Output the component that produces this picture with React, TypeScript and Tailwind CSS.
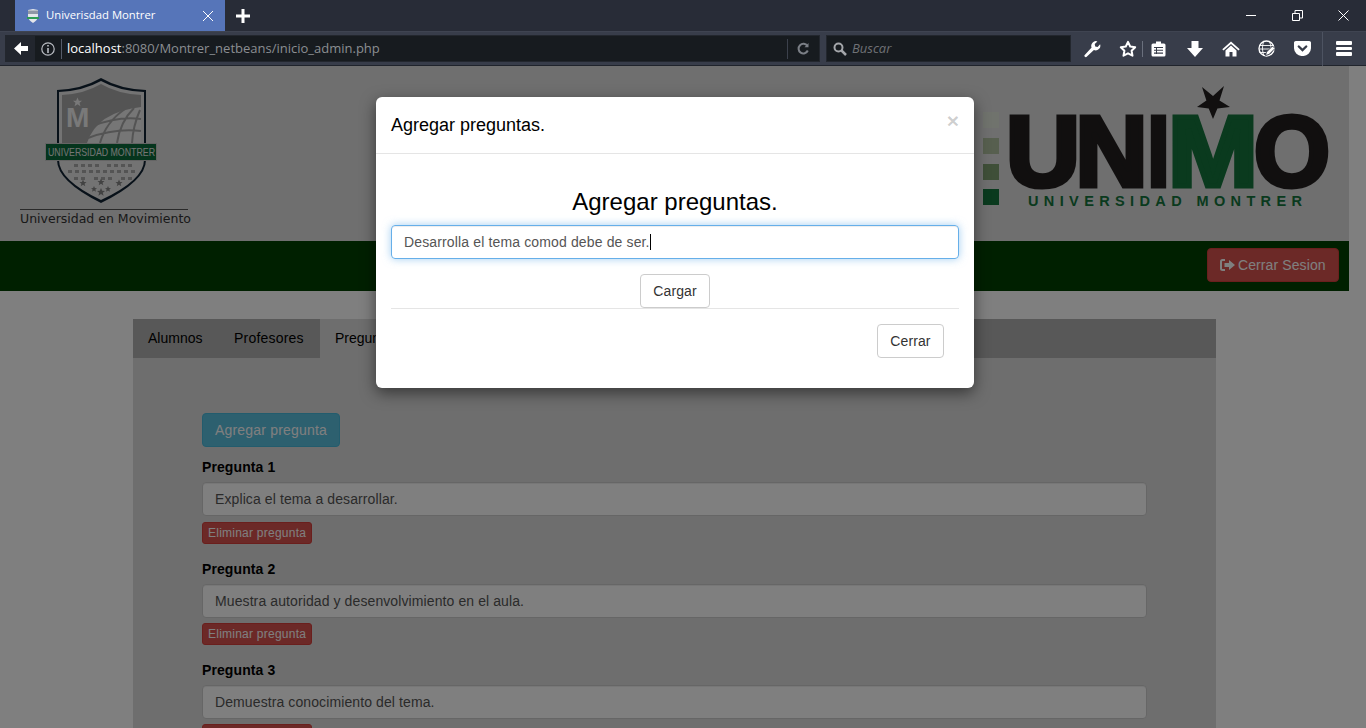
const questions = [
  { title: 'Pregunta 1', text: 'Explica el tema a desarrollar.' },
  { title: 'Pregunta 2', text: 'Muestra autoridad y desenvolvimiento en el aula.' },
  { title: 'Pregunta 3', text: 'Demuestra conocimiento del tema.' },
];

function ToolbarIcons() {
  return (
    <div className="flex items-center h-full">
      <svg width="18" height="18" viewBox="0 0 18 18" className="ml-[12px]" fill="#fff">
        <path d="M1.5 15.200 8.600 7.600a4.600 4.600 0 0 1 .9-4.900A4.600 4.600 0 0 1 14.400 1.400L11.700 4l.5 2.400 2.400.5 2.500-2.600a4.600 4.600 0 0 1-1.200 4.800 4.600 4.600 0 0 1-5 1L3.400 17a1.400 1.400 0 0 1-1.900-1.800z" />
      </svg>
      <svg width="18" height="18" viewBox="0 0 18 18" className="ml-[18px]" fill="none" stroke="#fff" strokeWidth="2" strokeLinejoin="round">
        <path d="M9 1.900l2.200 4.600 5 .7-3.600 3.500.9 5L9 13.300l-4.500 2.400.9-5-3.600-3.500 5-.7z" />
      </svg>
      <div className="w-px h-[16px] bg-[#6a707d] ml-[5px]" />
      <svg width="15" height="16" viewBox="0 0 15 16" className="ml-[8px]">
        <rect x="0.500" y="2.500" width="14" height="13" rx="1.500" fill="#fff" />
        <rect x="5" y="0.500" width="5" height="3" fill="#fff" />
        <path d="M3 6.500h9M3 9.300h9M3 12.100h9" stroke="#383d4a" strokeWidth="1.100" />
        <path d="M5.500 6v7" stroke="#383d4a" strokeWidth="1" />
      </svg>
      <svg width="16" height="16" viewBox="0 0 16 16" className="ml-[21px]" fill="#fff">
        <path d="M4.500 0h7v7H16l-8 9-8-9h4.500z" />
      </svg>
      <svg width="18" height="16" viewBox="0 0 18 16" className="ml-[19px]" fill="#fff">
        <path d="M9 .5 .3 8.200l1.200 1.200L9 3l7.500 6.400 1.200-1.200z" />
        <path d="M9 4.500 3.500 9.400V15.500h4V11h3v4.500h4V9.400z" />
      </svg>
      <svg width="18" height="17" viewBox="0 0 18 17" className="ml-[18px]" fill="none" stroke="#fff">
        <circle cx="8.500" cy="8.500" r="7.500" strokeWidth="1.400" />
        <path d="M1.500 5.500h14M1.500 9h13M1.500 12.500h8M6 1c-2 4-2 10 0 15M11 1c1.500 2.500 2 5 1.800 7" strokeWidth="0.900" />
        <path d="M7.500 15.500 8.500 12l6-6 2.500 2.500-6 6z" fill="#fff" stroke="#383d4a" strokeWidth="0.900" />
      </svg>
      <svg width="17" height="15" viewBox="0 0 17 15" className="ml-[18px]">
        <path d="M1.800 0h13.400c.9 0 1.800.8 1.800 1.800v5A8 8 0 0 1 8.500 15 8 8 0 0 1 0 6.800v-5C0 .8.900 0 1.800 0z" fill="#fff" />
        <path d="M4.800 5.500l3.700 3.500 3.700-3.500" fill="none" stroke="#383d4a" strokeWidth="2.400" strokeLinecap="round" />
      </svg>
      <div className="w-px h-[34px] bg-[#4d5361] ml-[11px]" />
      <div className="ml-[13px] flex flex-col gap-[2px]">
        <div className="w-[16px] h-[3.500px] bg-white rounded-[1px]" />
        <div className="w-[16px] h-[3.500px] bg-white rounded-[1px]" />
        <div className="w-[16px] h-[3.500px] bg-white rounded-[1px]" />
      </div>
    </div>
  );
}

function BrowserChrome() {
  return (
    <div className="h-[66px] bg-[#282c37] font-['Open_Sans',sans-serif]">
      <div className="h-[31px] flex items-center pl-[15px]">
        <div className="w-[210px] h-[31px] bg-[#5675b9] flex items-center pl-[12px] pr-[11px] text-white text-[11.300px]">
          <svg width="12" height="14" viewBox="0 0 12 14">
            <path d="M1 1 6 0l5 1v6c0 3-2 5-5 7-3-2-5-4-5-7z" fill="#e4e6ea" />
            <path d="M1 1.500h10v3.500H1z" fill="#8f96a5" />
            <rect x="0" y="8" width="12" height="2" fill="#2e9c55" />
          </svg>
          <span className="ml-[7px] flex-1">Univerisdad Montrer</span>
          <svg width="12" height="12" viewBox="0 0 12 12" stroke="#fff" strokeWidth="1">
            <path d="M1 1l10 10M11 1 1 11" />
          </svg>
        </div>
        <svg width="14" height="14" viewBox="0 0 14 14" className="ml-[11px]" fill="#fff">
          <path d="M5.500 0h3v5.500H14v3H8.500V14h-3V8.500H0v-3h5.500z" />
        </svg>
        <div className="ml-auto flex items-center h-full">
          <div className="w-[10px] h-px bg-white mr-[36px]" />
          <svg width="11" height="11" viewBox="0 0 11 11" fill="none" stroke="#fff" className="mr-[35px]">
            <path d="M.5 3.500h7v7h-7zM3 3.500V.5h7.500v7.500h-3" />
          </svg>
          <svg width="11" height="11" viewBox="0 0 11 11" stroke="#fff" className="mr-[17px]">
            <path d="M.5.500l10 10M10.500.500l-10 10" />
          </svg>
        </div>
      </div>
      <div className="h-[35px] bg-[#383d4a] border-t border-[#3f4451] border-b-[#20242c] border-b flex items-center pl-[5px]">
        <div className="w-[815px] h-[27px] bg-[#171b1f] flex items-center border border-[#23272e]">
          <div className="w-[29px] h-full bg-[#22262e] flex items-center justify-center">
            <svg width="14" height="13" viewBox="0 0 14 13" fill="#fff">
              <path d="M7 0 0 6.500 7 13V9h7V4H7z" />
            </svg>
          </div>
          <svg width="14" height="14" viewBox="0 0 14 14" className="ml-[6px]" fill="none" stroke="#b9bcc2" strokeWidth="1.200">
            <circle cx="7" cy="7" r="6.200" />
            <path d="M7 6v5M7 3v1.600" strokeWidth="1.600" />
          </svg>
          <div className="w-px h-[20px] bg-[#555b69] ml-[6px]" />
          <div className="ml-[5px] flex-1 text-[13px] leading-none text-[#8b8e92]">
            <span className="text-white">localhost</span>:8080/Montrer_netbeans/inicio_admin.php
          </div>
          <div className="w-px h-[20px] bg-[#3c414c]" />
          <svg width="13" height="13" viewBox="0 0 13 13" className="mx-[9px]" fill="none" stroke="#7b7f86" strokeWidth="2">
            <path d="M10.800 8.500a4.800 4.800 0 1 1-.4-4.500" />
            <path d="M11.500 1v4.200H7.500" fill="#7b7f86" stroke="none" />
          </svg>
        </div>
        <div className="ml-[6px] w-[245px] h-[27px] bg-[#171b1f] flex items-center border border-[#23272e] pl-[6px]">
          <svg width="14" height="14" viewBox="0 0 14 14" fill="none" stroke="#a4a6aa" strokeWidth="2">
            <circle cx="5.500" cy="5.500" r="4" />
            <path d="M8.500 8.500 13 13" strokeWidth="2.500" />
          </svg>
          <span className="ml-[5px] text-[13px] italic text-[#6f7175]">Buscar</span>
        </div>
        <ToolbarIcons />
      </div>
    </div>
  );
}

function ShieldLogo() {
  const dots = [
    { y: 88, xs: [74, 81, 88, 95, 107, 114, 121, 128] },
    { y: 94, xs: [68, 75, 82, 89, 96, 103, 110, 117, 124, 131] },
    { y: 101, xs: [74, 81, 94, 101, 108, 121, 128] },
  ];
  const star = (x: number, y: number, r: number) =>
    `M${x} ${y - r}l${r * 0.3} ${r * 0.7} ${r * 0.7} .1-${r * 0.55} ${r * 0.45} ${r * 0.2} ${r * 0.75}-${r * 0.65}-${r * 0.4}-${r * 0.65} ${r * 0.4} ${r * 0.2}-${r * 0.75}-${r * 0.55}-${r * 0.45} ${r * 0.7}-.1z`;
  return (
    <svg width="190" height="136" viewBox="0 0 190 136" className="block">
      <path d="M101 2Q120 13 146 14V84Q146 105 101 127 57 105 57 84V14Q82 13 101 2z" fill="#123" />
      <path d="M101 5Q119 15 144 16V84Q144 104 101 124 59 104 59 84V16Q83 15 101 5z" fill="#e6e6e6" />
      <path d="M101 8Q118 18 141 19V67H62V19Q84 18 101 8z" fill="#a9a9a9" />
      <path d="M87 67Q97 36 141 31V67z" fill="#ececec" />
      <path d="M100 67Q106 46 125 33M117 67Q120 46 134 32M132 67Q133 50 140 34M93 50Q118 40 141 43M88 62Q115 52 141 55" fill="none" stroke="#a9a9a9" strokeWidth="2" />
      <text x="66" y="51" fontFamily="Liberation Sans" fontWeight="700" fontSize="28" fill="#f2f2f2">M</text>
      <path d={star(77.5, 26, 4.500)} fill="#f2f2f2" />
      <rect x="45.500" y="67.500" width="111" height="17" fill="#0b6b3a" stroke="#c9c9c9" />
      <text x="48" y="80" fontFamily="Liberation Sans" fontSize="11" textLength="107" lengthAdjust="spacingAndGlyphs" fill="#e8e8e8">UNIVERSIDAD MONTRER</text>
      <g fill="#a8a8a8">
        {dots.map(row => row.xs.map(x => <rect key={`${x}-${row.y}`} x={x} y={row.y} width="4" height="3" />))}
      </g>
      <g fill="#858585">
        <path d={star(83, 107, 3.500)} />
        <path d={star(101, 106, 3.500)} />
        <path d={star(119, 107, 3.500)} />
        <path d={star(94, 113, 3)} />
        <path d={star(108, 113, 3)} />
        <path d={star(101, 116, 4)} />
      </g>
      <rect x="20" y="133" width="168" height="1" fill="#555" />
    </svg>
  );
}

function UnimoLogo() {
  return (
    <svg width="352" height="130" viewBox="0 0 352 130" className="block">
      <rect x="4" y="26" width="16" height="16" fill="#e0e6da" />
      <rect x="4" y="52" width="16" height="16" fill="#aebf9f" />
      <rect x="4" y="78" width="16" height="16" fill="#7f9e70" />
      <rect x="4" y="103" width="16" height="16" fill="#14743c" />
      <g fontFamily="Liberation Sans" fontWeight="700" fontSize="100" strokeWidth="5">
        <text x="27" y="99.500" textLength="74" lengthAdjust="spacingAndGlyphs" fill="#221f1f" stroke="#221f1f">U</text>
        <text x="96.500" y="99.500" textLength="72" lengthAdjust="spacingAndGlyphs" fill="#221f1f" stroke="#221f1f">N</text>
        <text x="168.500" y="99.500" textLength="22" lengthAdjust="spacingAndGlyphs" fill="#221f1f" stroke="#221f1f">I</text>
        <text x="189" y="99.500" textLength="90" lengthAdjust="spacingAndGlyphs" fill="#14743c" stroke="#14743c">M</text>
        <text x="275" y="99.500" textLength="76" lengthAdjust="spacingAndGlyphs" fill="#221f1f" stroke="#221f1f">O</text>
      </g>
      <path d="M223 1 234 10 245 0 240.500 14.400 251 21 238.400 22.400 234 33 229.700 22.500 218 21 227.400 14.600z" fill="#221f1f" />
      <text x="49" y="120" fontFamily="Liberation Sans" fontWeight="700" fontSize="14.500" textLength="274" fill="#14743c">UNIVERSIDAD MONTRER</text>
    </svg>
  );
}

function Question({ title, text, first }: { title: string; text: string; first: boolean }) {
  return (
    <div className="mb-[15px]">
      <label className="block font-bold text-[14px] leading-[20px] mb-[5px] text-black tracking-[0.1px]">{title}</label>
      <div className="h-[34px] rounded-[4px] bg-white border border-[#ccc] px-[12px] leading-[33px] tracking-[0.1px] text-[#555] shadow-[inset_0_1px_1px_rgba(0,0,0,0.075)]">
        {text}
      </div>
      <button className={`block ${first ? 'mt-[6px]' : 'mt-[5px]'} h-[22px] px-[5px] text-[12px] leading-[18px] tracking-[0.24px] rounded-[3px] bg-[#d9534f] border border-[#d43f3a] text-white`}>
        Eliminar pregunta
      </button>
    </div>
  );
}

function Page() {
  return (
    <div className="w-[1349px] font-['Liberation_Sans',sans-serif] text-[14px] text-[#333] bg-white h-[662px] overflow-hidden">
      <div className="h-[175px] bg-[#dedede] flex justify-between">
        <div className="pt-[10px] relative">
          <ShieldLogo />
          <div className="absolute left-[20px] top-[143px] whitespace-nowrap text-[12.500px] leading-[20px] text-[#333] font-['DejaVu_Sans',sans-serif]">
            Universidad en Movimiento
          </div>
        </div>
        <div className="pt-[20px] pr-[18px]">
          <UnimoLogo />
        </div>
      </div>
      <div className="h-[50px] bg-[#004000] flex items-start justify-end pr-[10px] pt-[7px]">
        <button className="h-[34px] w-[132px] pl-[12px] rounded-[4px] bg-[#d9534f] border border-[#d43f3a] text-white flex items-center gap-[3px] tracking-[0.1px]">
          <svg width="15" height="12" viewBox="0 0 15 12" fill="#fff">
            <path d="M5 0H2.500A2.500 2.500 0 0 0 0 2.500v7A2.500 2.500 0 0 0 2.500 12H5v-2H2.500a.5.5 0 0 1-.5-.5v-7a.5.5 0 0 1 .5-.5H5z" />
            <path d="M9 1 15 6 9 11V8H4.500V4H9z" />
          </svg>
          Cerrar Sesion
        </button>
      </div>
      <div className="mt-[28px] ml-[133px] w-[1083px] bg-[#ddd]">
        <div className="h-[39px] bg-[#b0b0b0] flex text-black">
          <div className="w-[85px] pl-[15px] leading-[39px]">Alumnos</div>
          <div className="w-[102px] pl-[16px] leading-[39px] tracking-[0.2px]">Profesores</div>
          <div className="pl-[15px] leading-[39px] bg-[#ddd] w-[330px]">Preguntas</div>
        </div>
        <div className="pl-[69px] pt-[55px] pr-[69px] pb-[60px]">
          <button className="h-[34px] w-[138px] rounded-[4px] bg-[#5bc0de] border border-[#46b8da] text-white tracking-[0.2px] mb-[10px]">
            Agregar pregunta
          </button>
          {questions.map((q, i) => (
            <Question key={q.title} title={q.title} text={q.text} first={i === 0} />
          ))}
        </div>
      </div>
    </div>
  );
}

export default function App() {
  return (
    <div className="relative w-[1366px] h-[728px] overflow-hidden bg-white">
      <BrowserChrome />
      <Page />
      {/* backdrop + modal, sit over the page */}
      <div className="absolute left-0 right-0 top-[66px] bottom-0 bg-black/50" />
      <div className="absolute left-[376px] top-[97px] w-[598px] h-[291px] bg-white rounded-[6px] shadow-[0_5px_15px_rgba(0,0,0,0.5)] font-['Liberation_Sans',sans-serif] text-[14px] text-[#333]">
        <div className="h-[57px] border-b border-[#e5e5e5] flex items-center justify-between pl-[15px] pr-[15px]">
          <h4 className="text-[18px] text-black">Agregar preguntas.</h4>
          <span className="text-[21px] font-bold text-black/20 leading-none -mt-[10px]">×</span>
        </div>
        <div className="px-[15px]">
          <h3 className="text-[24px] leading-[26px] text-black text-center pt-[35px]">Agregar preguntas.</h3>
          <div className="mt-[10px] h-[34px] rounded-[4px] border border-[#66afe9] shadow-[inset_0_1px_1px_rgba(0,0,0,0.075),0_0_8px_rgba(102,175,233,0.6)] px-[12px] flex items-center text-[#555] tracking-[0.14px]">
            Desarrolla el tema comod debe de ser.
            <span className="inline-block w-px h-[16px] bg-black" />
          </div>
          <div className="flex justify-center mt-[15px]">
            <button className="h-[34px] w-[70px] rounded-[4px] bg-white border border-[#ccc] tracking-[0.1px]">Cargar</button>
          </div>
          <div className="border-t border-[#e5e5e5] flex justify-end pt-[15px] pr-[15px]">
            <button className="h-[34px] w-[67px] rounded-[4px] bg-white border border-[#ccc] tracking-[0.1px]">Cerrar</button>
          </div>
        </div>
      </div>
    </div>
  );
}
